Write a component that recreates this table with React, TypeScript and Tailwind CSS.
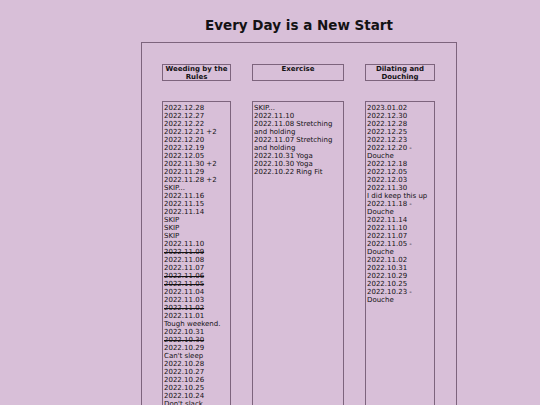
type Entry = { text: string; struck?: boolean };

const weeding: Entry[] = [
  { text: "2022.12.28" },
  { text: "2022.12.27" },
  { text: "2022.12.22" },
  { text: "2022.12.21 +2" },
  { text: "2022.12.20" },
  { text: "2022.12.19" },
  { text: "2022.12.05" },
  { text: "2022.11.30 +2" },
  { text: "2022.11.29" },
  { text: "2022.11.28 +2" },
  { text: "SKIP..." },
  { text: "2022.11.16" },
  { text: "2022.11.15" },
  { text: "2022.11.14" },
  { text: "SKIP" },
  { text: "SKIP" },
  { text: "SKIP" },
  { text: "2022.11.10" },
  { text: "2022.11.09", struck: true },
  { text: "2022.11.08" },
  { text: "2022.11.07" },
  { text: "2022.11.06", struck: true },
  { text: "2022.11.05", struck: true },
  { text: "2022.11.04" },
  { text: "2022.11.03" },
  { text: "2022.11.02", struck: true },
  { text: "2022.11.01" },
  { text: "Tough weekend." },
  { text: "2022.10.31" },
  { text: "2022.10.30", struck: true },
  { text: "2022.10.29" },
  { text: "Can't sleep" },
  { text: "2022.10.28" },
  { text: "2022.10.27" },
  { text: "2022.10.26" },
  { text: "2022.10.25" },
  { text: "2022.10.24" },
  { text: "Don't slack..." },
];

const exercise: Entry[] = [
  { text: "SKIP..." },
  { text: "2022.11.10" },
  { text: "2022.11.08 Stretching and holding" },
  { text: "2022.11.07 Stretching and holding" },
  { text: "2022.10.31 Yoga" },
  { text: "2022.10.30 Yoga" },
  { text: "2022.10.22 Ring Fit" },
];

const dilating: Entry[] = [
  { text: "2023.01.02" },
  { text: "2022.12.30" },
  { text: "2022.12.28" },
  { text: "2022.12.25" },
  { text: "2022.12.23" },
  { text: "2022.12.20 - Douche" },
  { text: "2022.12.18" },
  { text: "2022.12.05" },
  { text: "2022.12.03" },
  { text: "2022.11.30" },
  { text: "I did keep this up" },
  { text: "2022.11.18 - Douche" },
  { text: "2022.11.14" },
  { text: "2022.11.10" },
  { text: "2022.11.07" },
  { text: "2022.11.05 - Douche" },
  { text: "2022.11.02" },
  { text: "2022.10.31" },
  { text: "2022.10.29" },
  { text: "2022.10.25" },
  { text: "2022.10.23 - Douche" },
];

function EntryList({ entries }: { entries: Entry[] }) {
  return (
    <div className="h-[420px] border border-[#7d647d] pt-[2px] pl-px">
      {entries.map((e, i) => (
        <div key={i} className={e.struck ? "line-through" : ""}>
          {e.text}
        </div>
      ))}
    </div>
  );
}

export default function App() {
  const columns = [
    { title: "Weeding by the Rules", width: "w-[69px]", entries: weeding },
    { title: "Exercise", width: "w-[92px]", entries: exercise },
    { title: "Dilating and Douching", width: "w-[70px]", entries: dilating },
  ];

  return (
    <div
      className="h-[405px] overflow-hidden bg-[#d8bfd8] text-[#141214] pl-[141px]"
      style={{ fontFamily: '"DejaVu Sans", Verdana, sans-serif' }}
    >
      <div className="w-[316px]">
        <h1 className="pt-[17px] h-[42px] text-center text-[13.5px] leading-[16px] font-bold">
          Every Day is a New Start
        </h1>

        <div className="border border-[#7d647d] px-[20px] pt-[21px] text-[7px] leading-[8px]">
          {/* headers */}
          <div className="flex gap-[21px]">
            {columns.map((c) => (
              <div
                key={c.title}
                className={`${c.width} h-[17px] border border-[#7d647d] text-center font-bold`}
              >
                {c.title}
              </div>
            ))}
          </div>

          {/* lists */}
          <div className="flex gap-[21px] mt-[20px]">
            {columns.map((c) => (
              <div key={c.title} className={c.width}>
                <EntryList entries={c.entries} />
              </div>
            ))}
          </div>
        </div>
      </div>
    </div>
  );
}
